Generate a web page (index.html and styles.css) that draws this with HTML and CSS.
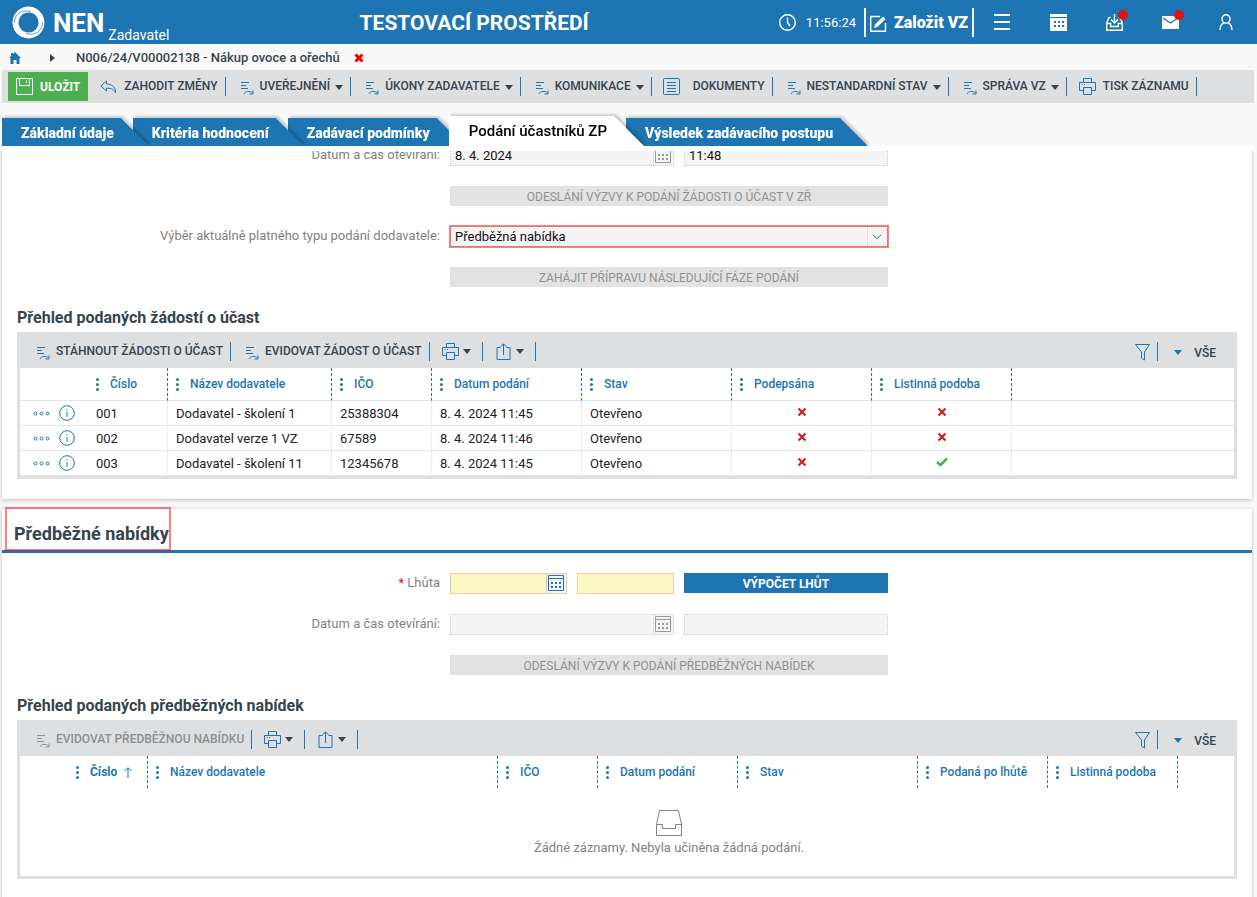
FILE: index.html
```html
<!DOCTYPE html>
<html lang="cs">
<head>
    <meta charset="UTF-8">
    <meta name="viewport" content="width=device-width, initial-scale=1.0">
    <title>NEN - Podání účastníků ZP</title>
    <link rel="stylesheet" href="styles.css">
</head>
<body>
    <!-- Icon sprite -->
    <svg class="sprite" aria-hidden="true">
        <symbol id="i-action" viewBox="0 0 14 14">
            <path d="M1 1.500h8M1 4.500h5M1 7.500h7M4 13c1-3 6-3.500 8.500-1M13 9.500v3.500h-3.500" />
        </symbol>
        <symbol id="i-print" viewBox="0 0 17 17">
            <path d="M4.500 4.500v-4h8v4M4.500 12.500h-4v-8h16v8h-4M4.500 9.500h8v7h-8zM2.500 6.500h1M5 6.500h1" />
        </symbol>
        <symbol id="i-share" viewBox="0 0 14 17">
            <path d="M4 4.500H.5v12h13v-12H10M7 12V1M4 3.800L7 .8l3 3" />
        </symbol>
        <symbol id="i-filter" viewBox="0 0 15 17">
            <path d="M.5 .5h14L9.500 8v8l-3-2V8z" />
        </symbol>
        <symbol id="i-back" viewBox="0 0 17 14">
            <path d="M6.500 1L.8 6l5.700 5V8.300c5-.3 7.500 1 9 4.700.8-5-3-9-9-9z" />
        </symbol>
        <symbol id="i-doc" viewBox="0 0 17 17">
            <rect x=".5" y=".5" width="16" height="16" rx="1" />
            <path d="M4 4.500h9M4 7.500h9M4 10.500h9M4 13.500h9" />
        </symbol>
        <symbol id="i-cal" viewBox="0 0 16 16">
            <path d="M.5 .5h15v15H.5zM.5 3.500h15" />
            <path class="fill" d="M3 7h2v2H3zM7 7h2v2H7zM11 7h2v2h-2zM3 11h2v2H3zM7 11h2v2H7zM11 11h2v2h-2z" />
        </symbol>
        <symbol id="i-caret" viewBox="0 0 8 5">
            <path class="fill" d="M0 0h8L4 5z" />
        </symbol>
        <symbol id="i-no" viewBox="0 0 10 10">
            <path class="thick" d="M1.500 1.500l7 7M8.500 1.500l-7 7" />
        </symbol>
        <symbol id="i-yes" viewBox="0 0 12 10">
            <path class="check" d="M1 5l3.500 3L11 1.500" />
        </symbol>
        <symbol id="i-more" viewBox="0 0 17 5">
            <circle cx="2.500" cy="2.500" r="1.500" />
            <circle cx="8.500" cy="2.500" r="1.500" />
            <circle cx="14.500" cy="2.500" r="1.500" />
        </symbol>
        <symbol id="i-info" viewBox="0 0 16 16">
            <circle cx="8" cy="8" r="7.300" />
            <path d="M8 7v5M8 4.300v1.200" />
        </symbol>
        <symbol id="i-dots" viewBox="0 0 3 13">
            <circle class="fill" cx="1.500" cy="1.500" r="1.500" />
            <circle class="fill" cx="1.500" cy="6.500" r="1.500" />
            <circle class="fill" cx="1.500" cy="11.500" r="1.500" />
        </symbol>
    </svg>

    <header class="header">
        <a class="logo" href="#">
            <svg width="33" height="33" viewBox="0 0 33 33" aria-hidden="true">
                <path class="fill" fill-rule="evenodd" d="M16.500 .5a16 16 0 1 1-.1 0zM16.500 6.500a10 10 0 1 0 .1 0z" />
                <path class="swirl" d="M2.500 17C2.500 8 9 3 19 5.500M30.500 16C30.500 25 24 30 14 27.500" />
            </svg>
            <strong>NEN</strong>
            <span class="role">Zadavatel</span>
        </a>
        <div class="env">TESTOVACÍ PROSTŘEDÍ</div>
        <div class="clock">
            <svg width="17" height="17" viewBox="0 0 17 17" aria-hidden="true"><circle cx="8.500" cy="8.500" r="7.800" /><path d="M8.500 3.500v5l2.500 3.500" /></svg>
            <time>11:56:24</time>
        </div>
        <a class="create" href="#">
            <svg width="17" height="17" viewBox="0 0 17 17" aria-hidden="true"><path d="M10 1.500H.7v14.800h14.800V8" /><path class="fill" d="M4 13l1-3.500L13 1.500l2.500 2.500-8 8z" /></svg>
            Založit VZ
        </a>
        <nav class="header-nav">
            <button type="button" aria-label="Menu">
                <svg width="16" height="16" viewBox="0 0 16 16"><path class="bars" d="M0 1h16M0 8h16M0 15h16" /></svg>
            </button>
            <button type="button" aria-label="Kalendář">
                <svg width="17" height="17" viewBox="0 0 17 17"><path class="fill" fill-rule="evenodd" d="M0 0h17v3H0zM0 4h17v13H0zM4 7v2h2V7zM8 7v2h2V7zM12 7v2h2V7zM4 11v2h2v-2zM8 11v2h2v-2zM12 11v2h2v-2z" /></svg>
            </button>
            <button type="button" aria-label="Doručené">
                <svg width="17" height="17" viewBox="0 0 17 17"><path d="M4.500 3.500H3L.7 9v7.300h15.600V9L14 3.500h-1.500M.7 9.500h4v3h7.600v-3h4M8.500 0v8.500M5 5.500L8.500 9 12 5.500" /></svg>
                <span class="badge"></span>
            </button>
            <button type="button" aria-label="Zprávy">
                <svg width="17" height="17" viewBox="0 0 17 17"><path class="fill" d="M0 2h17v13H0z" /><path class="fold" d="M1 4l7.500 5L16 4" /></svg>
                <span class="badge"></span>
            </button>
            <button type="button" aria-label="Uživatel">
                <svg width="14" height="16" viewBox="0 0 14 16"><ellipse cx="7" cy="5" rx="4" ry="4.300" /><path d="M1 16c0-4 1.500-6 4-7.200M13 16c0-4-1.500-6-4-7.200" /></svg>
            </button>
        </nav>
    </header>

    <nav class="breadcrumb">
        <a href="#" aria-label="Domů">
            <svg width="12" height="12" viewBox="0 0 12 12"><path class="fill" d="M6 0l6 6h-1.500v6H7.500V8h-3v4h-3V6H0L2 4V1h2v1z" /></svg>
        </a>
        <svg class="arrow" width="5" height="8" viewBox="0 0 5 8" aria-hidden="true"><path class="fill" d="M0 0l5 4-5 4z" /></svg>
        <span>N006/24/V00002138 - Nákup ovoce a ořechů</span>
        <button type="button" class="close" aria-label="Zavřít">
            <svg width="10" height="10" viewBox="0 0 10 10"><path class="cross" d="M1.500 1.500l7 7M8.500 1.500l-7 7" /></svg>
        </button>
    </nav>

    <div class="toolbar main-toolbar">
        <button type="button" class="save">
            <svg width="17" height="17" viewBox="0 0 17 17" aria-hidden="true"><path d="M.5 .5h16v16H.5zM3.500 .5v7h10v-7M10.500 2.500v2.500" /></svg>
            ULOŽIT
        </button>
        <button type="button" class="tool wide"><svg width="17" height="14"><use href="#i-back" /></svg>ZAHODIT ZMĚNY</button>
        <button type="button" class="tool"><svg class="action" width="14" height="14"><use href="#i-action" /></svg>UVEŘEJNĚNÍ<svg class="caret" width="8" height="5"><use href="#i-caret" /></svg></button>
        <button type="button" class="tool"><svg class="action" width="14" height="14"><use href="#i-action" /></svg>ÚKONY ZADAVATELE<svg class="caret" width="8" height="5"><use href="#i-caret" /></svg></button>
        <button type="button" class="tool"><svg class="action" width="14" height="14"><use href="#i-action" /></svg>KOMUNIKACE<svg class="caret" width="8" height="5"><use href="#i-caret" /></svg></button>
        <button type="button" class="tool wide documents"><svg width="17" height="17"><use href="#i-doc" /></svg>DOKUMENTY</button>
        <button type="button" class="tool"><svg class="action" width="14" height="14"><use href="#i-action" /></svg>NESTANDARDNÍ STAV<svg class="caret" width="8" height="5"><use href="#i-caret" /></svg></button>
        <button type="button" class="tool"><svg class="action" width="14" height="14"><use href="#i-action" /></svg>SPRÁVA VZ<svg class="caret" width="8" height="5"><use href="#i-caret" /></svg></button>
        <button type="button" class="tool wide"><svg width="17" height="17"><use href="#i-print" /></svg>TISK ZÁZNAMU</button>
    </div>

    <nav class="tabs">
        <div class="tab tab-1"><a href="#">Základní údaje</a></div>
        <div class="tab tab-2"><a href="#">Kritéria hodnocení</a></div>
        <div class="tab tab-3"><a href="#">Zadávací podmínky</a></div>
        <div class="tab active"><a href="#" aria-current="page">Podání účastníků ZP</a></div>
        <div class="tab"><a href="#">Výsledek zadávacího postupu</a></div>
    </nav>

    <main class="content">
        <section class="panel">
            <form class="form scrolled">
                <label for="opening-1">Datum a čas otevírání:</label>
                <div class="fields">
                    <div class="box readonly span-2">
                        <input id="opening-1" type="text" value="8. 4. 2024" readonly>
                        <button type="button" aria-label="Kalendář" disabled><svg width="16" height="16"><use href="#i-cal" /></svg></button>
                    </div>
                    <div class="box readonly"><input type="text" value="11:48" aria-label="Čas otevírání" readonly></div>
                </div>

                <button type="button" class="button" disabled>ODESLÁNÍ VÝZVY K PODÁNÍ ŽÁDOSTI O ÚČAST V ZŘ</button>

                <label for="type">Výběr aktuálně platného typu podání dodavatele:</label>
                <div class="box readonly marked">
                    <select id="type">
                        <option>Předběžná nabídka</option>
                    </select>
                    <span class="chevron"><svg width="10" height="6" viewBox="0 0 10 6" aria-hidden="true"><path d="M1 .8l4 4 4-4" /></svg></span>
                </div>

                <button type="button" class="button" disabled>ZAHÁJIT PŘÍPRAVU NÁSLEDUJÍCÍ FÁZE PODÁNÍ</button>
            </form>

            <h3>Přehled podaných žádostí o účast</h3>
            <div class="grid">
                <div class="toolbar grid-toolbar">
                    <button type="button" class="tool"><svg class="action" width="14" height="14"><use href="#i-action" /></svg>STÁHNOUT ŽÁDOSTI O ÚČAST</button>
                    <button type="button" class="tool"><svg class="action" width="14" height="14"><use href="#i-action" /></svg>EVIDOVAT ŽÁDOST O ÚČAST</button>
                    <button type="button" class="tool small" aria-label="Tisk"><svg width="17" height="17"><use href="#i-print" /></svg><svg class="caret" width="8" height="5"><use href="#i-caret" /></svg></button>
                    <button type="button" class="tool small" aria-label="Export"><svg width="17" height="17"><use href="#i-share" /></svg><svg class="caret" width="8" height="5"><use href="#i-caret" /></svg></button>
                    <button type="button" class="tool filter" aria-label="Filtr"><svg width="15" height="17"><use href="#i-filter" /></svg></button>
                    <button type="button" class="view"><svg width="8" height="5"><use href="#i-caret" /></svg>VŠE</button>
                </div>
                <table>
                    <colgroup>
                        <col class="w68"><col class="w80"><col class="w164"><col class="w100"><col class="w150"><col class="w150"><col class="w140"><col class="w140"><col>
                    </colgroup>
                    <thead>
                        <tr>
                            <th class="plain"></th>
                            <th><svg width="3" height="13"><use href="#i-dots" /></svg>Číslo</th>
                            <th><svg width="3" height="13"><use href="#i-dots" /></svg>Název dodavatele</th>
                            <th><svg width="3" height="13"><use href="#i-dots" /></svg>IČO</th>
                            <th><svg width="3" height="13"><use href="#i-dots" /></svg>Datum podání</th>
                            <th><svg width="3" height="13"><use href="#i-dots" /></svg>Stav</th>
                            <th><svg width="3" height="13"><use href="#i-dots" /></svg>Podepsána</th>
                            <th><svg width="3" height="13"><use href="#i-dots" /></svg>Listinná podoba</th>
                            <th class="plain"></th>
                        </tr>
                    </thead>
                    <tbody>
                        <tr>
                            <td class="actions"><svg width="17" height="5"><use href="#i-more" /></svg><svg width="16" height="16"><use href="#i-info" /></svg></td>
                            <td>001</td>
                            <td>Dodavatel - školení 1</td>
                            <td>25388304</td>
                            <td>8. 4. 2024 11:45</td>
                            <td>Otevřeno</td>
                            <td class="flag no"><svg width="10" height="10"><use href="#i-no" /></svg></td>
                            <td class="flag no"><svg width="10" height="10"><use href="#i-no" /></svg></td>
                            <td class="plain"></td>
                        </tr>
                        <tr>
                            <td class="actions"><svg width="17" height="5"><use href="#i-more" /></svg><svg width="16" height="16"><use href="#i-info" /></svg></td>
                            <td>002</td>
                            <td>Dodavatel verze 1 VZ</td>
                            <td>67589</td>
                            <td>8. 4. 2024 11:46</td>
                            <td>Otevřeno</td>
                            <td class="flag no"><svg width="10" height="10"><use href="#i-no" /></svg></td>
                            <td class="flag no"><svg width="10" height="10"><use href="#i-no" /></svg></td>
                            <td class="plain"></td>
                        </tr>
                        <tr>
                            <td class="actions"><svg width="17" height="5"><use href="#i-more" /></svg><svg width="16" height="16"><use href="#i-info" /></svg></td>
                            <td>003</td>
                            <td>Dodavatel - školení 11</td>
                            <td>12345678</td>
                            <td>8. 4. 2024 11:45</td>
                            <td>Otevřeno</td>
                            <td class="flag no"><svg width="10" height="10"><use href="#i-no" /></svg></td>
                            <td class="flag yes"><svg width="12" height="10"><use href="#i-yes" /></svg></td>
                            <td class="plain"></td>
                        </tr>
                    </tbody>
                </table>
            </div>
        </section>

        <section class="panel">
            <div class="panel-head">
                <h2>Předběžné nabídky</h2>
            </div>
            <form class="form">
                <label for="deadline"><span class="required">*</span> Lhůta</label>
                <div class="fields">
                    <div class="box required-box">
                        <input id="deadline" type="text">
                        <button type="button" aria-label="Kalendář"><svg width="16" height="16"><use href="#i-cal" /></svg></button>
                    </div>
                    <div class="box required-box"><input type="text" aria-label="Čas lhůty"></div>
                    <button type="button" class="button primary">VÝPOČET LHŮT</button>
                </div>

                <label for="opening-2">Datum a čas otevírání:</label>
                <div class="fields">
                    <div class="box readonly span-2">
                        <input id="opening-2" type="text" readonly>
                        <button type="button" aria-label="Kalendář" disabled><svg width="16" height="16"><use href="#i-cal" /></svg></button>
                    </div>
                    <div class="box readonly"><input type="text" aria-label="Čas otevírání" readonly></div>
                </div>

                <button type="button" class="button" disabled>ODESLÁNÍ VÝZVY K PODÁNÍ PŘEDBĚŽNÝCH NABÍDEK</button>
            </form>

            <h3>Přehled podaných předběžných nabídek</h3>
            <div class="grid">
                <div class="toolbar grid-toolbar">
                    <button type="button" class="tool" disabled><svg class="action" width="14" height="14"><use href="#i-action" /></svg>EVIDOVAT PŘEDBĚŽNOU NABÍDKU</button>
                    <button type="button" class="tool small" aria-label="Tisk"><svg width="17" height="17"><use href="#i-print" /></svg><svg class="caret" width="8" height="5"><use href="#i-caret" /></svg></button>
                    <button type="button" class="tool small" aria-label="Export"><svg width="17" height="17"><use href="#i-share" /></svg><svg class="caret" width="8" height="5"><use href="#i-caret" /></svg></button>
                    <button type="button" class="tool filter" aria-label="Filtr"><svg width="15" height="17"><use href="#i-filter" /></svg></button>
                    <button type="button" class="view"><svg width="8" height="5"><use href="#i-caret" /></svg>VŠE</button>
                </div>
                <table class="no-rows">
                    <colgroup>
                        <col class="w48"><col class="w80"><col class="w350"><col class="w100"><col class="w140"><col class="w180"><col class="w130"><col class="w130"><col>
                    </colgroup>
                    <thead>
                        <tr>
                            <th class="plain"></th>
                            <th class="sorted"><svg width="3" height="13"><use href="#i-dots" /></svg>Číslo <svg class="sort" width="8" height="11" viewBox="0 0 8 11" aria-hidden="true"><path d="M4 11V1M.7 4L4 .7 7.300 4" /></svg></th>
                            <th><svg width="3" height="13"><use href="#i-dots" /></svg>Název dodavatele</th>
                            <th><svg width="3" height="13"><use href="#i-dots" /></svg>IČO</th>
                            <th><svg width="3" height="13"><use href="#i-dots" /></svg>Datum podání</th>
                            <th><svg width="3" height="13"><use href="#i-dots" /></svg>Stav</th>
                            <th><svg width="3" height="13"><use href="#i-dots" /></svg>Podaná po lhůtě</th>
                            <th><svg width="3" height="13"><use href="#i-dots" /></svg>Listinná podoba</th>
                            <th class="plain"></th>
                        </tr>
                    </thead>
                </table>
                <div class="empty">
                    <svg width="26" height="26" viewBox="0 0 26 26" aria-hidden="true"><path d="M.5 14.500L3.500 .5h19l3 14v11H.5zM.5 14.500h6v4h13v-4h6" /></svg>
                    <p>Žádné záznamy. Nebyla učiněna žádná podání.</p>
                </div>
            </div>
        </section>
    </main>
</body>
</html>
```

FILE: styles.css
```css
* {
    box-sizing: border-box;
}
body {
    margin: 0;
    height: 100vh;
    display: flex;
    flex-direction: column;
    overflow: hidden;
    background-color: #f9f9f9;
    color: #38444d;
    font-family: Roboto, "Liberation Sans", sans-serif;
    font-size: 13px;
    line-height: 16px;
}
a {
    color: inherit;
    text-decoration: none;
}
button, input, select {
    font: inherit;
    color: inherit;
    margin: 0;
    padding: 0;
    border: none;
    background: none;
}
button {
    cursor: pointer;
}
svg {
    flex: none;
    fill: none;
    stroke: currentColor;
    stroke-width: 1;
}
.fill {
    fill: currentColor;
    stroke: none;
}
.thick {
    stroke-width: 2;
}
.check {
    stroke-width: 2.5;
}
.sprite {
    display: none;
}

/* Header */
.header {
    flex: none;
    display: flex;
    align-items: center;
    height: 44px;
    padding: 0 3px 0 12px;
    background-color: #1d75b3;
    color: #fff;
}
.logo {
    display: flex;
    align-items: center;
    height: 44px;
}
.logo strong {
    margin-left: 8px;
    padding-top: 2px;
    font-size: 26px;
    font-weight: 700;
}
.swirl {
    stroke: #1d75b3;
    stroke-width: 0.7;
}
.role {
    align-self: flex-end;
    margin-left: 4px;
    padding-bottom: 1px;
    font-size: 14px;
}
.env {
    flex: 1;
    padding-top: 1px;
    text-align: center;
    font-size: 21px;
    font-weight: 700;
}
.clock {
    display: flex;
    align-items: center;
    gap: 10px;
    margin-right: 8px;
}
.clock time {
    padding-top: 2px;
}
.clock svg, .header-nav svg, .create svg {
    stroke-width: 1.4;
}
.create {
    display: flex;
    align-items: center;
    gap: 7px;
    height: 29px;
    padding: 2px 4px 0;
    border-left: 2px solid #fff;
    border-right: 2px solid #fff;
    font-size: 16px;
    font-weight: 900;
}
.header-nav {
    display: flex;
}
.header-nav button {
    position: relative;
    display: flex;
    align-items: center;
    justify-content: center;
    width: 56px;
    height: 44px;
}
.header-nav .bars {
    stroke-width: 2;
}
.fold {
    stroke: #1d75b3;
}
.badge {
    position: absolute;
    top: 10px;
    right: 14px;
    width: 10px;
    height: 10px;
    border-radius: 50%;
    background-color: #dc1414;
}

/* Breadcrumb */
.breadcrumb {
    flex: none;
    display: flex;
    align-items: center;
    height: 26px;
    padding: 1px 0 0 9px;
    font-weight: 500;
}
.breadcrumb a {
    display: flex;
    color: #1d75b3;
}
.breadcrumb .arrow {
    margin: 0 21px 0 29px;
}
.close {
    display: flex;
    margin-left: 14px;
    color: #f00000;
}
.cross {
    stroke-width: 3;
}

/* Toolbars */
.toolbar {
    display: flex;
    align-items: center;
    background-color: #dddfe1;
    font-size: 12px;
    font-weight: 500;
    white-space: nowrap;
}
.main-toolbar {
    flex: none;
    height: 33px;
    margin: 0 3px 0 2px;
    padding-left: 6px;
}
.save {
    display: flex;
    align-items: center;
    gap: 7px;
    height: 29px;
    padding: 0 8px;
    background-color: #4caf50;
    color: #fff;
    font-weight: 700;
}
.tool {
    display: flex;
    align-items: center;
    height: 19px;
    padding: 0 7px 2px 14px;
    border-right: 1px solid #1d75b3;
}
.tool svg {
    margin: 2px 7px 0 0;
    color: #1d75b3;
}
.tool .action {
    margin: 5px 6px 0 0;
}
.tool .caret {
    margin: 4px 0 0 5px;
    color: #38444d;
}
.tool.wide {
    padding-left: 12px;
}
.tool.documents {
    padding-left: 11px;
}
.tool.documents svg {
    margin-right: 13px;
}
.tool.small {
    padding: 0 11px 0 12px;
}
.tool.small svg {
    margin: 0;
}
.tool.small .caret {
    margin-left: 4px;
}
.tool:disabled, .tool:disabled svg {
    color: #8c8f91;
}
.grid-toolbar {
    height: 36px;
    padding: 3px 18px 0 2px;
}
.tool.filter {
    margin-left: auto;
    padding: 0;
}
.view {
    display: flex;
    align-items: center;
    gap: 12px;
    margin-left: 16px;
    padding-top: 2px;
}
.view svg {
    color: #1d75b3;
}

/* Tabs */
.tabs {
    flex: none;
    display: flex;
    align-items: flex-end;
    height: 43px;
    padding-left: 2px;
    white-space: nowrap;
}
.tab {
    position: relative;
    margin-right: -16px;
    filter: drop-shadow(2px -2px 1px rgba(0, 0, 0, 0.18));
}
.tab a {
    display: block;
    height: 28px;
    padding: 1px 35px 0 19px;
    background-color: #1d75b3;
    color: #fff;
    font-size: 14px;
    font-weight: 900;
    line-height: 28px;
    clip-path: polygon(0 0, calc(100% - 28px) 0, 100% 100%, 0 100%);
}
.tab-1 {
    z-index: 3;
}
.tab-2 {
    z-index: 2;
}
.tab-3 {
    z-index: 1;
}
.tab.active {
    z-index: 4;
    margin-right: -18px;
}
.tab.active a {
    height: 30px;
    padding: 1px 37px 0 20px;
    background-color: #fff;
    color: #000;
    font-size: 15px;
    font-weight: 500;
    clip-path: polygon(0 0, calc(100% - 30px) 0, 100% 100%, 0 100%);
}

/* Content */
.content {
    flex: 1;
    position: relative;
    z-index: 5;
    min-height: 0;
    overflow: hidden;
    margin-right: 3px;
    border-top: 5px solid #fff;
}
.panel {
    margin: 0 2px 10px;
    padding-bottom: 20px;
    background-color: #fff;
    box-shadow: 0 1px 4px rgba(0, 0, 0, 0.25);
}
.panel-head {
    height: 44px;
    padding-left: 5px;
    border-bottom: 3px solid #1d75b3;
}
h2 {
    width: max-content;
    height: 40px;
    margin: 0;
    padding: 9px 0 0 7px;
    outline: 2px solid rgba(255, 0, 0, 0.5);
    font-size: 18px;
    font-weight: 700;
    line-height: 32px;
}
h3 {
    margin: 20px 15px 0;
    padding-top: 1px;
    font-size: 16px;
    font-weight: 700;
    line-height: 20px;
    height: 25px;
}

/* Form */
.form {
    display: grid;
    grid-template-columns: minmax(0, 438px) minmax(0, 438px);
    gap: 20px 10px;
    padding-top: 20px;
}
.form.scrolled {
    margin-top: -6px;
    padding-top: 0;
}
.form label {
    padding-top: 2px;
    text-align: right;
    color: #828282;
}
.required {
    color: #dc1414;
}
.fields {
    display: grid;
    grid-template-columns: minmax(0, 117fr) minmax(0, 97fr) minmax(0, 204fr);
    gap: 10px;
}
.span-2 {
    grid-column: span 2;
}
.box {
    display: flex;
    height: 21px;
    border: 1px solid #ded39e;
}
.box input, .box select {
    flex: 1;
    min-width: 0;
    appearance: none;
    padding-left: 4px;
    color: #111;
}
.box button, .chevron {
    flex: none;
    display: flex;
    align-items: flex-start;
    width: 20px;
    padding: 1px 0 0 1px;
    border-left: 1px solid #ccc;
    background-color: #f4f4f4;
    color: #1d75b3;
}
.box .chevron {
    align-items: center;
    padding-left: 4px;
}
.required-box {
    background-color: #fff8c4;
}
.readonly {
    border: 1px dotted #ccc;
    background-color: #f4f4f4;
}
.readonly button, .readonly .chevron {
    border-left: 1px dotted #ccc;
}
.readonly button {
    color: #999;
}
.marked {
    outline: 2px solid rgba(255, 0, 0, 0.5);
    outline-offset: -1px;
}
.button {
    grid-column: 2;
    height: 20px;
    padding-top: 2px;
    background-color: #e2e2e2;
    color: #919191;
    font-size: 12px;
}
.button.primary {
    grid-column: 3;
    background-color: #1d75b3;
    color: #fff;
    font-weight: 700;
}

/* Data grids */
.grid {
    margin: 0 15px;
    padding: 0 3px 3px;
    background-color: #dddfe1;
}
table {
    width: 100%;
    table-layout: fixed;
    border-collapse: separate;
    border-spacing: 0;
    background-color: #fff;
}
th {
    height: 33px;
    padding: 0 0 0 8px;
    border-right: 1px dashed #1d75b3;
    border-bottom: 1px solid #dde6ec;
    color: #1d75b3;
    font-size: 12px;
    font-weight: 500;
    text-align: left;
    white-space: nowrap;
}
th svg {
    margin-right: 11px;
    vertical-align: middle;
}
th .sort {
    margin: 0 0 0 4px;
}
th.sorted {
    font-weight: 700;
}
td {
    height: 25px;
    padding: 2px 0 0 8px;
    border-right: 1px dotted #dcdcdc;
    border-bottom: 1px solid #dde6ec;
    color: #222;
    white-space: nowrap;
}
th.plain, td.plain, td.actions {
    border-right: none;
}
.no-rows th {
    height: 32px;
    border-bottom: none;
}
.actions {
    padding: 0 0 0 13px;
    color: #1d75b3;
}
.actions svg {
    vertical-align: middle;
}
.actions svg + svg {
    margin-left: 9px;
}
.flag {
    padding: 0;
    text-align: center;
}
.no {
    color: #dc1414;
}
.yes {
    color: #4caf50;
}
.w48 { width: 48px; }
.w68 { width: 68px; }
.w80 { width: 80px; }
.w100 { width: 100px; }
.w130 { width: 130px; }
.w140 { width: 140px; }
.w150 { width: 150px; }
.w164 { width: 164px; }
.w180 { width: 180px; }
.w350 { width: 350px; }
.empty {
    height: 88px;
    padding: 22px 0 0 84px;
    background-color: #fff;
    color: #828282;
    text-align: center;
}
.empty svg {
    display: block;
    margin: 0 auto;
}
.empty p {
    margin: 4px 0 0;
}
```
